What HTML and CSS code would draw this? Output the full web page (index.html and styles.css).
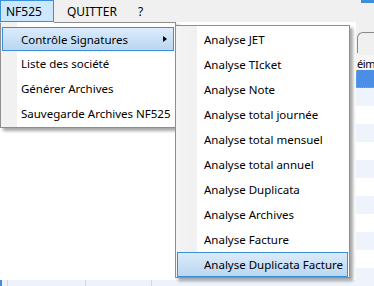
FILE: index.html
```html
<!DOCTYPE html>
<html>
<head>
<meta charset="utf-8">
<link rel="stylesheet" href="styles.css">
</head>
<body>
<div class="app">
  <div class="menubar">
    <div class="mb-item active">NF525</div>
    <div class="mb-item">QUITTER</div>
    <div class="mb-item">?</div>
    <div class="mb-spacer"></div>
    <div class="mb-blue"></div>
  </div>
  <div class="workspace">
    <div class="left">
      <div class="left-fill"></div>
      <div class="left-row">
        <div class="cell c1"></div>
        <div class="cell c2"></div>
        <div class="cell c3"></div>
        <div class="cell c4"></div>
      </div>
    </div>
    <div class="right">
      <div class="right-top"><div class="tabline"></div></div>
      <div class="hdr">éim</div>
      <div class="row sel"></div>
      <div class="row alt"></div>
      <div class="row"></div>
      <div class="row alt"></div>
      <div class="row"></div>
      <div class="row alt"></div>
      <div class="row"></div>
      <div class="row alt"></div>
      <div class="row"></div>
      <div class="row alt"></div>
      <div class="row"></div>
      <div class="row alt"></div>
    </div>
  </div>

  <div class="menu main-menu">
    <div class="mi hot"><span class="lbl">Contrôle Signatures</span><span class="arrow"></span></div>
    <div class="mi"><span class="lbl">Liste des société</span></div>
    <div class="mi"><span class="lbl">Générer Archives</span></div>
    <div class="mi"><span class="lbl">Sauvegarde Archives NF525</span></div>
  </div>

  <div class="menu sub-menu">
    <div class="mi"><span class="lbl">Analyse JET</span></div>
    <div class="mi"><span class="lbl">Analyse TIcket</span></div>
    <div class="mi"><span class="lbl">Analyse Note</span></div>
    <div class="mi"><span class="lbl">Analyse total journée</span></div>
    <div class="mi"><span class="lbl">Analyse total mensuel</span></div>
    <div class="mi"><span class="lbl">Analyse total annuel</span></div>
    <div class="mi"><span class="lbl">Analyse Duplicata</span></div>
    <div class="mi"><span class="lbl">Analyse Archives</span></div>
    <div class="mi"><span class="lbl">Analyse Facture</span></div>
    <div class="mi hot"><span class="lbl">Analyse Duplicata Facture</span></div>
  </div>
</div>
</body>
</html>
```

FILE: styles.css
```css
html, body {
  margin: 0;
  padding: 0;
}
body {
  width: 374px;
  height: 286px;
  overflow: hidden;
  background: #ffffff;
  font-family: "Noto Sans", "Open Sans", sans-serif;
  font-size: 11.5px;
  color: #000;
}
.app {
  position: relative;
  width: 374px;
  height: 286px;
  overflow: hidden;
}
.menubar {
  height: 22px;
  background: #f0f0f0;
  display: flex;
  align-items: stretch;
  font-size: 12px;
}
.mb-item {
  display: flex;
  align-items: center;
  padding: 0 7px 0 6px;
  margin-right: 6px;
  box-sizing: border-box;
  border: 1px solid transparent;
  border-bottom: none;
}
.mb-item.active {
  width: 54px;
  padding-left: 5px;
  background: #cce8ff;
  border-color: #3d8fd9;
  border-bottom: 1px solid #3d8fd9;
  margin-right: 6px;
}
.mb-spacer { flex: 1; }
.mb-blue {
  width: 13px;
  height: 3px;
  background: #3d8fd9;
}

.workspace {
  display: flex;
  height: 264px;
}
.left {
  flex: 1;
  display: flex;
  flex-direction: column;
  background: #fff;
}
.left-fill { flex: 1; }
.left-row {
  height: 6px;
  display: flex;
  background: #eef3fb;
}
.cell {
  border-right: 1px solid #d4d8de;
  box-sizing: border-box;
}
.c1 { width: 8px; border-left: 2px solid #3d8fd9; }
.c2 { width: 78px; }
.c3 { width: 66px; }
.c4 { flex: 1; border-right: none; }

.right {
  width: 18px;
  display: flex;
  flex-direction: column;
  background: #fff;
}
.right-top {
  height: 41px;
  background: #f0f0f0;
}
.tabline {
  margin-top: 10px;
  margin-left: 1px;
  height: 20px;
  border-top: 1px solid #8a8a8a;
  border-left: 1px solid #8a8a8a;
  border-top-left-radius: 6px;
}
.hdr {
  height: 18px;
  line-height: 18px;
  white-space: nowrap;
  overflow: hidden;
  padding-left: 1px;
  background: #f6f6f6;
  font-size: 11px;
  letter-spacing: -0.4px;
}
.row {
  height: 18px;
  flex: none;
}
.row.alt { background: #eef3fc; }
.row.sel {
  background: #4a8ee6;
  border-left: 1px dotted #d9962b;
  border-bottom: 1px dotted #d9962b;
  box-sizing: border-box;
}

/* menus */
.menu {
  position: absolute;
  background: #fff;
  border: 1px solid #8e8e8e;
  box-sizing: border-box;
  box-shadow: 3px 3px 3px rgba(0,0,0,0.35);
}
.main-menu {
  left: 0;
  top: 22px;
  width: 176px;
  height: 106px;
  padding-top: 3px;
  border-top-color: transparent;
  background: linear-gradient(to right, #f1f1f1 0, #f1f1f1 16px, #fff 16px);
}
.main-menu::before {
  content: "";
  position: absolute;
  left: 53px;
  right: -1px;
  top: -1px;
  height: 1px;
  background: #8e8e8e;
}
.sub-menu {
  left: 175px;
  top: 25px;
  width: 175px;
  height: 253px;
  padding-top: 1px;
  background: linear-gradient(to right, #f4f4f4 0, #f0f0f0 20px, #fff 22px);
}
.mi {
  height: 25px;
  display: flex;
  align-items: center;
  margin: 0 1px;
  box-sizing: border-box;
  border: 1px solid transparent;
  white-space: nowrap;
  position: relative;
}
.main-menu .mi { padding-left: 18px; }
.sub-menu .mi { padding-left: 26px; }
.mi.hot {
  border-color: #3d8fd9;
  background: linear-gradient(to bottom, #dcebfb, #b9d7f2);
}
.main-menu .mi.hot { height: 24px; margin-top: 1px; margin-bottom: 0; }
.arrow {
  position: absolute;
  right: 6px;
  top: 8px;
  width: 0;
  height: 0;
  border-top: 3.5px solid transparent;
  border-bottom: 3.5px solid transparent;
  border-left: 4px solid #000;
}
```
